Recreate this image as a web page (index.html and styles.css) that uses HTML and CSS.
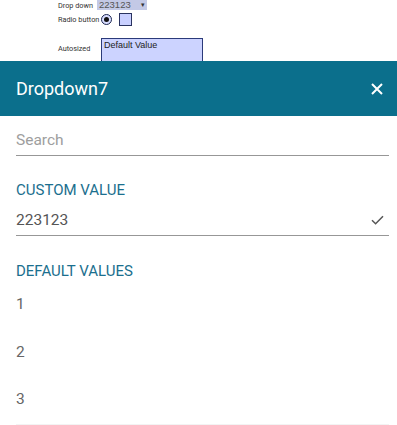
FILE: index.html
```html
<!DOCTYPE html>
<html lang="en">
<head>
  <meta charset="UTF-8" />
  <meta name="viewport" content="width=device-width, initial-scale=1.0">
  <title>Dropdown7</title>
  <link rel="stylesheet" href="styles.css">
</head>
<body>
  <div class="behind">
    <div class="form-row row-select">
      <span class="form-label">Drop down</span>
      <div class="fake-select">223123<span class="arrow">&#9662;</span></div>
    </div>
    <div class="form-row row-radio">
      <span class="form-label wide">Radio button</span>
      <span class="radio"><span class="dot"></span></span>
      <span class="checkbox"></span>
    </div>
    <div class="form-row row-text">
      <span class="form-label wide autosized">Autosized</span>
      <div class="textbox">Default Value</div>
    </div>
  </div>

  <div class="sheet">
    <div class="sheet-header">
      <h2>Dropdown7</h2>
      <svg class="close" width="12" height="12" viewBox="0 0 12 12">
        <path d="M1 1 L11 11 M11 1 L1 11" stroke="#fff" stroke-width="2" fill="none" />
      </svg>
    </div>

    <div class="sheet-body">
      <div class="field search">Search</div>

      <div class="section-label">CUSTOM VALUE</div>
      <div class="field custom">
        <span>223123</span>
        <svg class="check" width="13" height="10" viewBox="0 0 13 10">
          <path d="M1 5.2 L4.6 8.8 L12 1.2" stroke="#555" stroke-width="1.5" fill="none" />
        </svg>
      </div>

      <div class="section-label defaults">DEFAULT VALUES</div>
      <div class="list">
        <div class="list-item">1</div>
        <div class="list-item">2</div>
        <div class="list-item">3</div>
      </div>
    </div>
  </div>
</body>
</html>
```

FILE: styles.css
```css
html, body {
  margin: 0;
  padding: 0;
  box-sizing: border-box;
  background-color: #FFFFFF;
  font-family: Roboto, 'Noto Sans', sans-serif;
}
.behind {
  height: 61px;
  overflow: hidden;
  padding-left: 58px;
  font-family: Roboto, 'Liberation Sans', sans-serif;
}
.form-row {
  display: flex;
  align-items: center;
}
.form-label {
  width: 39px;
  font-size: 7.3px;
  color: #333;
  white-space: nowrap;
}
.form-label.wide {
  width: 43px;
}
.row-select {
  height: 10px;
}
.fake-select {
  width: 46px;
  height: 10px;
  padding: 0 2px;
  background-color: #c3c9e6;
  font-family: 'Liberation Sans', Arial, sans-serif;
  font-size: 9.5px;
  line-height: 10px;
  color: #555;
  display: flex;
  justify-content: space-between;
}
.arrow {
  font-size: 7px;
  color: #333;
}
.row-radio {
  margin-top: 3px;
  height: 13px;
}
.radio {
  width: 9px;
  height: 9px;
  border: 1.5px solid #1c2750;
  border-radius: 50%;
  background-color: #d9ddff;
  display: flex;
  align-items: center;
  justify-content: center;
}
.dot {
  width: 5px;
  height: 5px;
  border-radius: 50%;
  background-color: #111;
}
.checkbox {
  width: 11px;
  height: 11px;
  margin-left: 7px;
  border: 1px solid #2a3360;
  background-color: #c9d0ff;
}
.row-text {
  margin-top: 12px;
  align-items: flex-start;
}
.autosized {
  margin-top: 6px;
}
.textbox {
  width: 96px;
  height: 26px;
  padding: 1px 2px;
  border: 1px solid #2b3a7a;
  background-color: #ccd3ff;
  font-family: 'Liberation Sans', Arial, sans-serif;
  font-size: 9px;
  color: #222;
}
.sheet-header {
  height: 55px;
  padding: 0 14px 0 16px;
  background-color: #0b6f8c;
  display: flex;
  align-items: center;
  justify-content: space-between;
}
.sheet-header h2 {
  margin: 0;
  font-size: 18px;
  font-weight: 400;
  color: #fff;
}
.sheet-body {
  padding: 0 8px 0 16px;
}
.field {
  line-height: 20px;
  padding-bottom: 5px;
  border-bottom: 1px solid #979797;
  font-size: 15.5px;
}
.search {
  margin-top: 14px;
  color: #9e9e9e;
}
.custom {
  margin-top: 10px;
  color: #555;
  display: flex;
  align-items: center;
  justify-content: space-between;
}
.check {
  margin-right: 5px;
}
.section-label {
  margin-top: 24px;
  line-height: 20px;
  font-size: 15px;
  color: #1b6f8e;
}
.section-label.defaults {
  margin-top: 25px;
}
.list {
  border-bottom: 2px solid #f3f3f3;
}
.list-item {
  height: 47.5px;
  line-height: 47.5px;
  font-size: 15.5px;
  color: #666;
}
```
